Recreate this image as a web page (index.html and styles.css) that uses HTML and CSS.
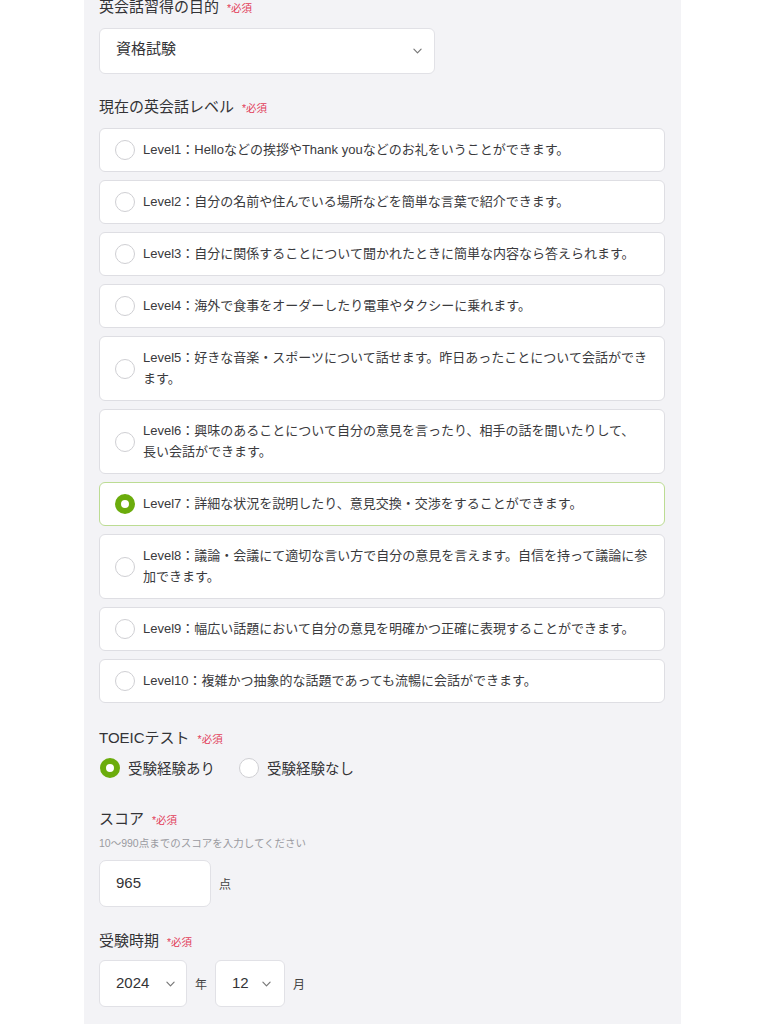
FILE: index.html
```html
<!DOCTYPE html>
<html lang="ja">
<head>
<meta charset="utf-8">
<link rel="stylesheet" href="styles.css">
</head>
<body>
<main class="col">
  <div class="label first">英会話習得の目的<span class="req">*必須</span></div>
  <div class="select wide"><span class="val">資格試験</span><svg class="chev" viewBox="0 0 10 6"><path d="M1 1l4 4 4-4" fill="none" stroke="#777" stroke-width="1.3" stroke-linecap="round" stroke-linejoin="round"/></svg></div>

  <div class="label lvl-label">現在の英会話レベル<span class="req">*必須</span></div>
  <div class="levels">
    <div class="card"><span class="radio"></span><p>Level1：Helloなどの挨拶やThank youなどのお礼をいうことができます。</p></div>
    <div class="card"><span class="radio"></span><p>Level2：自分の名前や住んでいる場所などを簡単な言葉で紹介できます。</p></div>
    <div class="card"><span class="radio"></span><p>Level3：自分に関係することについて聞かれたときに簡単な内容なら答えられます。</p></div>
    <div class="card"><span class="radio"></span><p>Level4：海外で食事をオーダーしたり電車やタクシーに乗れます。</p></div>
    <div class="card"><span class="radio"></span><p>Level5：好きな音楽・スポーツについて話せます。昨日あったことについて会話ができます。</p></div>
    <div class="card"><span class="radio"></span><p>Level6：興味のあることについて自分の意見を言ったり、相手の話を聞いたりして、<br>長い会話ができます。</p></div>
    <div class="card on"><span class="radio on"></span><p>Level7：詳細な状況を説明したり、意見交換・交渉をすることができます。</p></div>
    <div class="card"><span class="radio"></span><p>Level8：議論・会議にて適切な言い方で自分の意見を言えます。自信を持って議論に参加できます。</p></div>
    <div class="card"><span class="radio"></span><p>Level9：幅広い話題において自分の意見を明確かつ正確に表現することができます。</p></div>
    <div class="card"><span class="radio"></span><p>Level10：複雑かつ抽象的な話題であっても流暢に会話ができます。</p></div>
  </div>

  <div class="label toeic">TOEICテスト<span class="req">*必須</span></div>
  <div class="choices">
    <label class="choice"><span class="radio on"></span>受験経験あり</label>
    <label class="choice"><span class="radio"></span>受験経験なし</label>
  </div>

  <div class="label score">スコア<span class="req">*必須</span></div>
  <div class="hint">10〜990点までのスコアを入力してください</div>
  <div class="row">
    <div class="input"><span class="val">965</span></div><span class="unit">点</span>
  </div>

  <div class="label when">受験時期<span class="req">*必須</span></div>
  <div class="row">
    <div class="select year"><span class="val">2024</span><svg class="chev" viewBox="0 0 10 6"><path d="M1 1l4 4 4-4" fill="none" stroke="#777" stroke-width="1.3" stroke-linecap="round" stroke-linejoin="round"/></svg></div>
    <span class="unit u-year">年</span>
    <div class="select month"><span class="val">12</span><svg class="chev" viewBox="0 0 10 6"><path d="M1 1l4 4 4-4" fill="none" stroke="#777" stroke-width="1.3" stroke-linecap="round" stroke-linejoin="round"/></svg></div>
    <span class="unit u-month">月</span>
  </div>
</main>
</body>
</html>
```

FILE: styles.css
```css
* { box-sizing: border-box; }
html, body { margin: 0; padding: 0; background: #ffffff; }
body {
  font-family: "Liberation Sans", "Noto Sans CJK JP", sans-serif;
  color: #333336;
  height: 1024px;
  overflow: hidden;
}
.col {
  margin-left: 84px;
  width: 597px;
  min-height: 1024px;
  background: #f3f3f6;
  padding: 0 16px 0 15px;
  display: flex;
  flex-direction: column;
  align-items: flex-start;
}
.label {
  font-size: 15px;
  line-height: 20px;
  color: #333336;
  display: flex;
  align-items: center;
}
.req {
  color: #e2405a;
  font-size: 10.5px;
  margin-left: 8px;
  position: relative;
  top: 1px;
}
.first { margin-top: -3px; }
.select {
  background: #fff;
  border: 1px solid #e1e1e6;
  border-radius: 6px;
  display: flex;
  align-items: center;
  justify-content: space-between;
  font-size: 15px;
}
.val { line-height: 20px; position: relative; top: -1px; }
.chev { width: 9px; height: 6px; display: block; }
.wide {
  margin-top: 11px;
  width: 336px;
  height: 46px;
  padding: 0 12px 0 16px;
}
.wide .val { top: -2px; }
.lvl-label { margin-top: 23px; }
.levels {
  margin-top: 11px;
  width: 100%;
  display: flex;
  flex-direction: column;
  gap: 8px;
}
.card {
  background: #fff;
  border: 1px solid #dedee3;
  border-radius: 6px;
  display: flex;
  align-items: center;
  gap: 8px;
  padding: 10px 14px 11px 15px;
}
.card.on { border-color: #bcdc93; }
.card p {
  margin: 0;
  font-size: 13px;
  line-height: 21px;
  color: #3a3a3d;
}
.radio {
  flex: none;
  width: 20px;
  height: 20px;
  border-radius: 50%;
  border: 1.5px solid #cfcfd3;
  background: #fff;
  position: relative;
  top: 0.5px;
}
.radio.on {
  border: 6.5px solid #6bac0c;
  background: #fff;
}
.toeic { margin-top: 25px; }
.choices {
  margin-top: 8px;
  display: flex;
  align-items: center;
  height: 22px;
  margin-left: 1px;
}
.choice {
  display: flex;
  align-items: center;
  gap: 8px;
  font-size: 14.5px;
  color: #333336;
  margin-right: 24px;
}
.score { margin-top: 31px; }
.hint {
  margin-top: 6px;
  font-size: 10.5px;
  line-height: 16px;
  color: #9a9aa0;
}
.row {
  margin-top: 9px;
  display: flex;
  align-items: center;
}
.input {
  width: 112px;
  height: 47px;
  background: #fff;
  border: 1px solid #e1e1e6;
  border-radius: 7px;
  font-size: 15px;
  display: flex;
  align-items: center;
  padding-left: 16px;
}
.unit {
  font-size: 12px;
  color: #444;
  margin-left: 8px;
}
.when { margin-top: 24px; }
.year {
  width: 88px;
  height: 47px;
  padding: 0 11px 0 16px;
}
.month {
  width: 70px;
  height: 47px;
  padding: 0 13px 0 16px;
}
.u-year { margin-right: 8px; }
```
